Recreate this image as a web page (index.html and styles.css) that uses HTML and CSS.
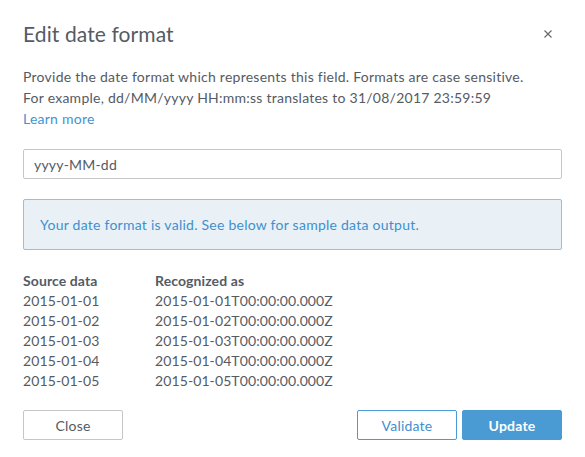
FILE: index.html
```html
<!DOCTYPE html>
<html>
<head>
<meta charset="utf-8">
<link rel="stylesheet" href="styles.css">
</head>
<body>
<div class="dialog">
  <div class="header">
    <h1 class="title">Edit date format</h1>
    <button class="close" aria-label="Close">
      <svg width="10" height="10" viewBox="0 0 10 10"><path d="M1.5 1.5L8.5 8.5M8.5 1.5L1.5 8.5" stroke="#666" stroke-width="1.1" fill="none"/></svg>
    </button>
  </div>
  <p class="desc">Provide the date format which represents this field. Formats are case sensitive.<br>For example, dd/MM/yyyy HH:mm:ss translates to 31/08/2017 23:59:59<br><a class="link" href="#">Learn more</a></p>
  <input class="input" type="text" value="yyyy-MM-dd">
  <div class="alert">Your date format is valid. See below for sample data output.</div>
  <div class="table">
    <div class="th">Source data</div><div class="th">Recognized as</div>
    <div>2015-01-01</div><div>2015-01-01T00:00:00.000Z</div>
    <div>2015-01-02</div><div>2015-01-02T00:00:00.000Z</div>
    <div>2015-01-03</div><div>2015-01-03T00:00:00.000Z</div>
    <div>2015-01-04</div><div>2015-01-04T00:00:00.000Z</div>
    <div>2015-01-05</div><div>2015-01-05T00:00:00.000Z</div>
  </div>
  <div class="footer">
    <button class="btn btn-default">Close</button>
    <div class="right">
      <button class="btn btn-outline">Validate</button>
      <button class="btn btn-primary">Update</button>
    </div>
  </div>
</div>
</body>
</html>
```
FILE: styles.css
```css
* { box-sizing: border-box; }
html, body { margin: 0; padding: 0; background: #fff; }
body { font-family: Lato, "Liberation Sans", sans-serif; color: #545b64; font-size: 14px; }
.dialog { width: 585px; height: 457px; padding: 22px 23px 0 23px; }
.header { display: flex; justify-content: space-between; align-items: center; height: 24px; }
.title { margin: 0; font-size: 21px; font-weight: 400; line-height: 24px; color: #545b64; letter-spacing: 0.1px; }
.close { border: 0; background: none; padding: 0; width: 20px; height: 20px; display: flex; align-items: center; justify-content: center; margin-right: 4px; }
.desc { margin: 20px 0 0 0; line-height: 21px; letter-spacing: 0.25px; }
.link { color: #3f94d3; text-decoration: none; }
.input { display: block; width: 539px; height: 30px; margin-top: 20px; border: 1px solid #c6c6c6; border-radius: 2px; padding: 0 10px; font: inherit; font-size: 14px; color: #545b64; letter-spacing: 0.2px; }
.alert { margin-top: 20px; height: 51px; border: 1px solid #8ec3e8; background: #e9f1f7; border-radius: 2px; color: #3f8fcf; display: flex; align-items: center; padding-left: 16px; letter-spacing: 0.25px; }
.table { display: grid; grid-template-columns: 132px auto; margin-top: 21px; line-height: 20px; letter-spacing: 0.1px; }
.th { font-weight: 700; }
.footer { display: flex; justify-content: space-between; margin-top: 19px; }
.right { display: flex; gap: 5px; }
.btn { width: 100px; height: 30px; font: inherit; font-size: 14px; border-radius: 2px; padding: 0; letter-spacing: 0.2px; }
.btn-default { background: #fff; border: 1px solid #c6c6c6; color: #545b64; }
.btn-outline { background: #fff; border: 1px solid #4a9bd4; color: #3f8fcf; }
.btn-primary { background: #4a9bd4; border: 1px solid #4a9bd4; color: #fff; font-weight: 700; }
```
